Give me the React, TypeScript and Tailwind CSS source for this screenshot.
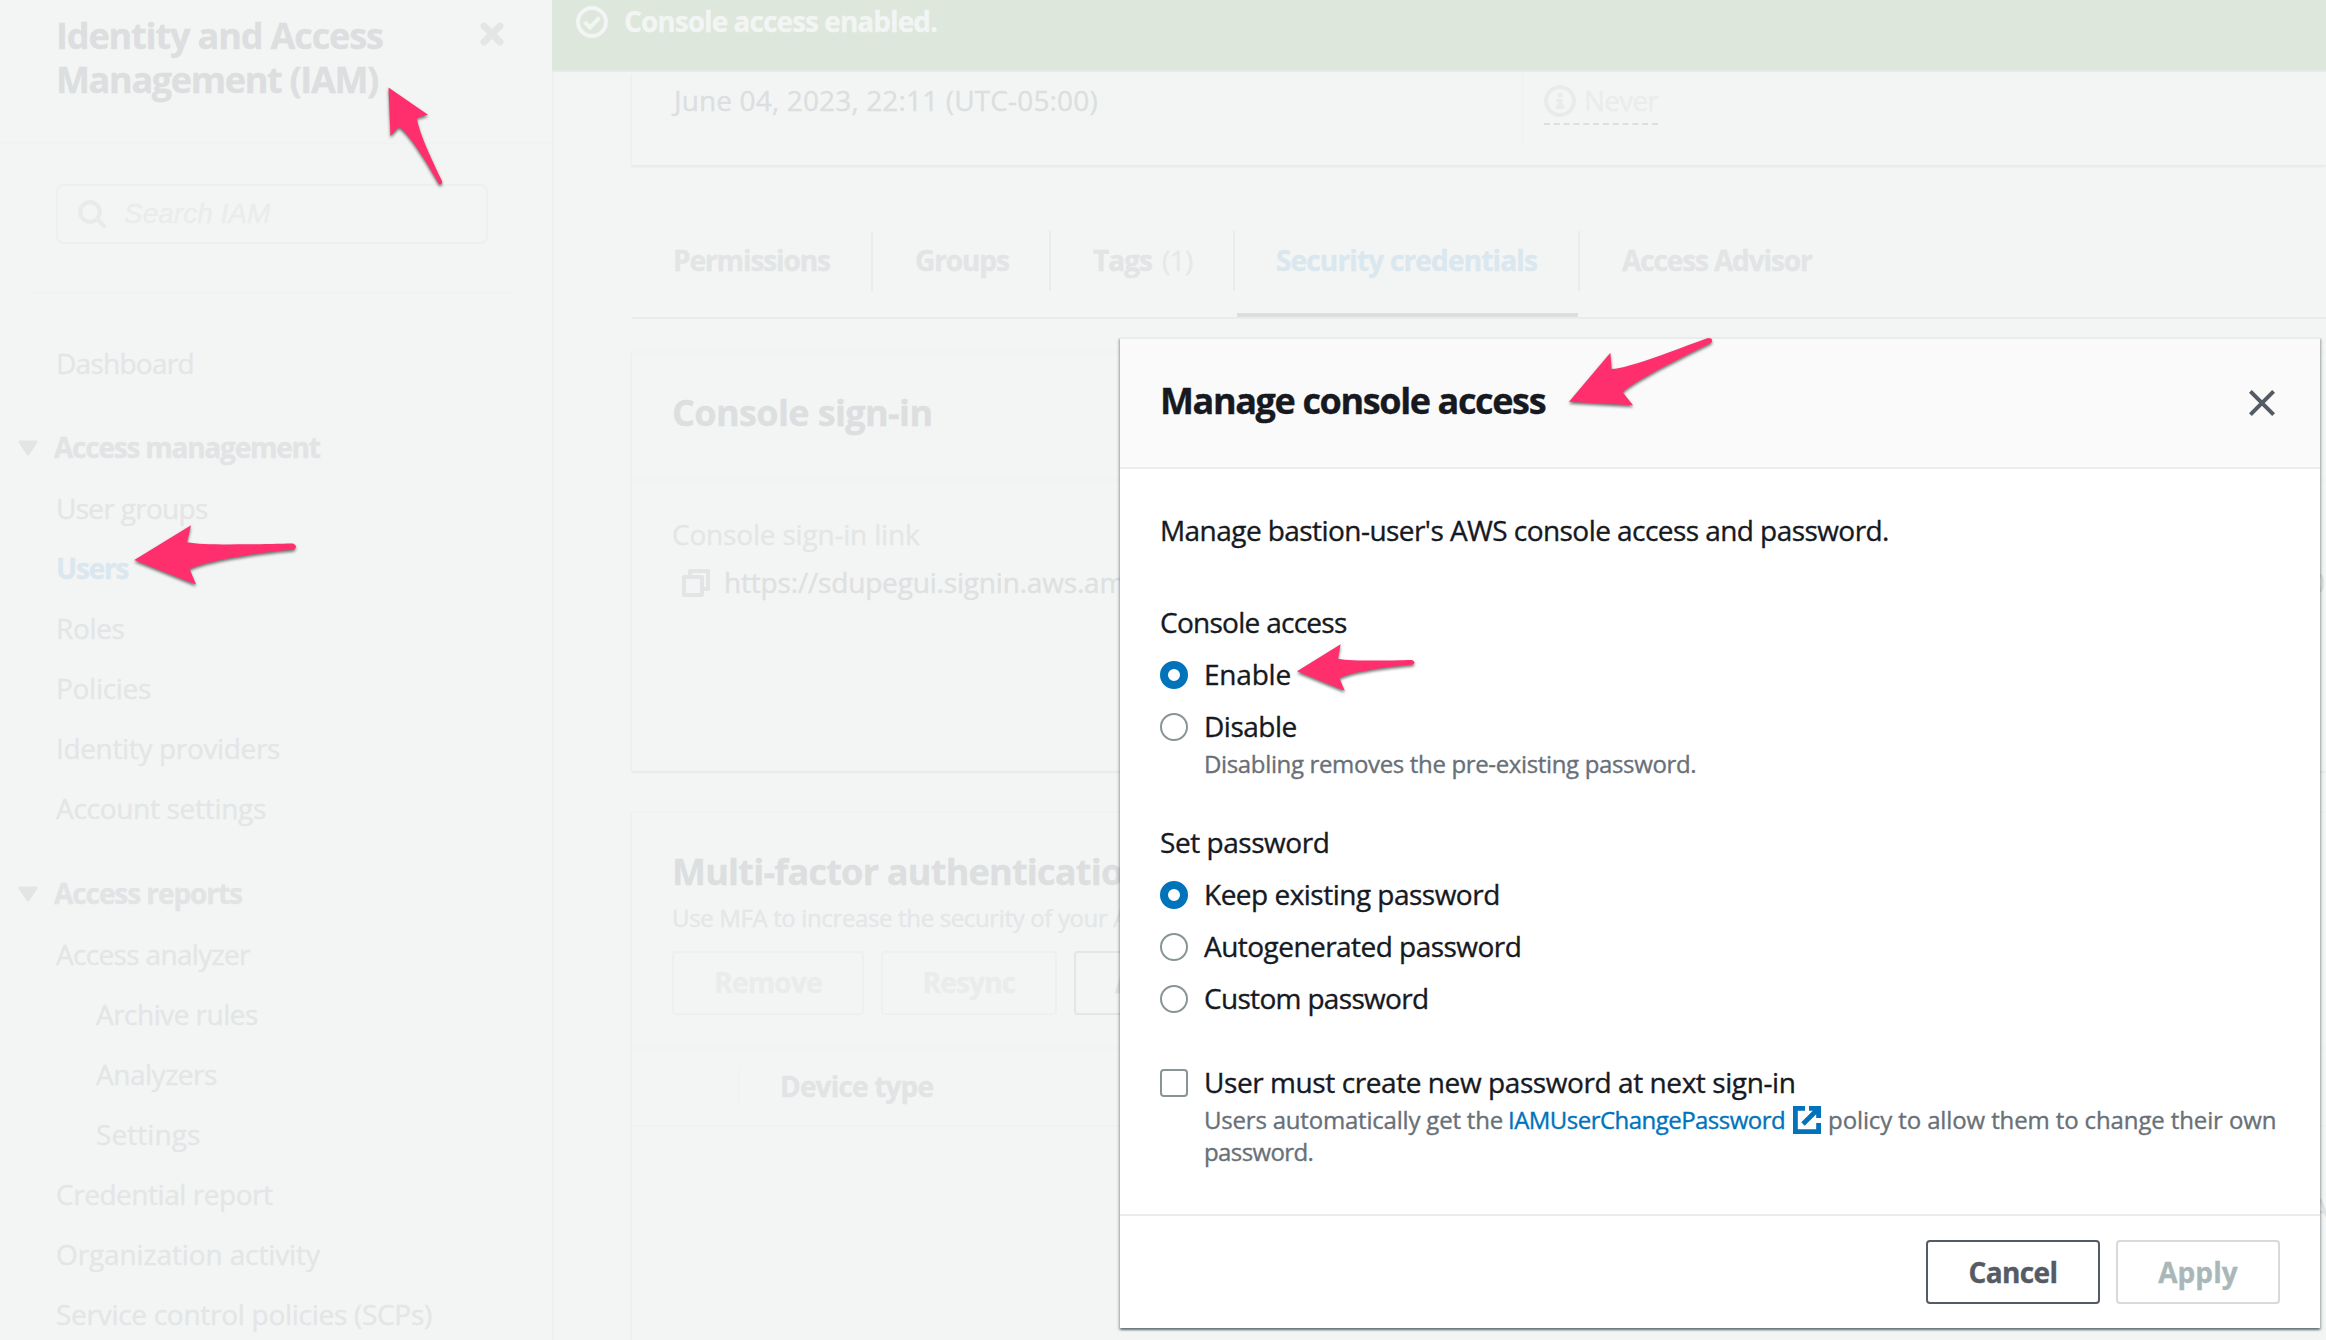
import type { ReactNode } from "react";

type NavItem = { label: string; style: string };

const managementLinks: NavItem[] = [
  { label: "User groups", style: "tracking-[-0.7px]" },
  { label: "Users", style: "tracking-[-1.21px] font-bold text-[#dae7ef]" },
  { label: "Roles", style: "tracking-[-0.35px]" },
  { label: "Policies", style: "tracking-[-0.29px]" },
  { label: "Identity providers", style: "tracking-[-0.35px]" },
  { label: "Account settings", style: "tracking-[-0.3px]" },
];

const reportLinks: NavItem[] = [
  { label: "Access analyzer", style: "tracking-[-0.67px]" },
  { label: "Archive rules", style: "pl-[40px] tracking-[-0.52px]" },
  { label: "Analyzers", style: "pl-[40px] tracking-[-0.48px]" },
  { label: "Settings", style: "pl-[40px] tracking-[0.07px]" },
  { label: "Credential report", style: "tracking-[-0.46px]" },
  { label: "Organization activity", style: "tracking-[-0.12px]" },
  { label: "Service control policies (SCPs)", style: "tracking-[-0.28px]" },
];

function SectionHeading({ label, style }: NavItem) {
  return (
    <div className="mt-6 flex h-[60px] items-center">
      <svg viewBox="0 0 20 16" className="mt-[2px] ml-[18px] h-4 w-5" aria-hidden="true">
        <path d="M2 2H18L10 14Z" fill="#e2e4e5" stroke="#e2e4e5" strokeWidth="3" strokeLinejoin="round" />
      </svg>
      <h2 className={`ml-[16px] font-bold whitespace-nowrap text-[#e2e3e5] ${style}`}>{label}</h2>
    </div>
  );
}

function NavList({ items }: { items: NavItem[] }) {
  return (
    <ul className="mt-[2px] pl-[56px]">
      {items.map((item) => (
        <li key={item.label} className={`h-[60px] leading-[59px] whitespace-nowrap ${item.style}`}>
          {item.label}
        </li>
      ))}
    </ul>
  );
}

function Sidebar() {
  return (
    <aside className="w-[552px] shrink-0 text-[#e3e5e6]">
      <header className="flex h-[144px] justify-between border-b-2 border-[#f1f3f2] pt-[14px] pl-[56px]">
        <h1 className="text-[36px] leading-[44px] font-bold whitespace-nowrap text-[#dcdee0]">
          <span className="block tracking-[-1.13px]">Identity and Access</span>
          <span className="block tracking-[-1.32px]">Management (IAM)</span>
        </h1>
        <svg viewBox="0 0 24 24" className="mt-[8px] mr-[48px] size-6" aria-hidden="true">
          <path d="M4 4L20 20M20 4L4 20" stroke="#e4e6e6" strokeWidth="7" strokeLinecap="round" />
        </svg>
      </header>
      <div className="mt-10 ml-[56px] flex h-[60px] w-[432px] items-center rounded-lg border-2 border-[#eef0ef] pl-[20px]">
        <svg viewBox="0 0 28 28" className="size-7" aria-hidden="true">
          <g fill="none" stroke="#e9ebeb" strokeWidth="4.2" strokeLinecap="round">
            <circle cx="12" cy="12" r="9.8" />
            <path d="M19.5 19.5L26 26" />
          </g>
        </svg>
        <span className="ml-[18px] font-['Liberation_Sans',sans-serif] text-[#eaecec] italic">Search IAM</span>
      </div>
      <hr className="mt-12 mr-[41px] ml-8 border-t-2 border-[#f1f3f2]" />
      <div className="mt-[39px] pl-[56px] leading-[60px] tracking-[-0.73px]">Dashboard</div>
      <SectionHeading label="Access management" style="tracking-[-1.22px]" />
      <NavList items={managementLinks} />
      <SectionHeading label="Access reports" style="tracking-[-1.07px]" />
      <NavList items={reportLinks} />
    </aside>
  );
}

function SuccessBanner() {
  return (
    <div className="flex h-[72px] items-start border-b-2 border-[#e6e9ea] bg-[#dde7dc] pl-6 text-[#f3f5f4]">
      <svg viewBox="0 0 32 32" className="mt-[6px] size-8" aria-hidden="true">
        <g fill="none" stroke="#f3f5f4" strokeWidth="4">
          <circle cx="16" cy="16" r="14" />
          <path d="M8.5 16L14 21.5L23.5 11.5" />
        </g>
      </svg>
      <span className="ml-4 leading-[43px] font-bold tracking-[-0.95px]">Console access enabled.</span>
    </div>
  );
}

function Card({ children, className }: { children: ReactNode; className: string }) {
  return (
    <section
      className={`shadow-[0_2px_2px_0_rgba(0,28,36,0.04),-2px_2px_2px_0_rgba(0,28,36,0.015)] bg-[#f3f5f4] ${className}`}
    >
      {children}
    </section>
  );
}

function Tab({ children, className, active }: { children: ReactNode; className: string; active?: boolean }) {
  return (
    <div className={`flex h-[86px] flex-col justify-between font-bold whitespace-nowrap ${className}`}>
      <div className="h-[60px] border-r-2 border-[#eaecec] leading-[59px]">{children}</div>
      {active && <div className="mr-[2px] -ml-[39px] h-1 bg-[#dcdfde]" />}
    </div>
  );
}

function Content() {
  return (
    <div className="border-l-2 border-[#eef0f0] pl-[78px]">
      <Card className="h-[93px] pt-[6px]">
        <div className="flex leading-[44px]">
          <div className="w-[890px] pl-[42px] tracking-[0.15px] whitespace-nowrap text-[#dcdee0]">
            June 04, 2023, 22:11 (UTC-05:00)
          </div>
          <div className="-mt-[6px] h-[73px] border-l-2 border-[#f1f3f2] pt-[6px] pl-5">
            <div className="flex h-[47px] items-start border-b-2 border-dashed border-[#dcdfde]">
              <svg viewBox="0 0 32 32" className="mt-[7px] size-8" aria-hidden="true">
                <circle cx="16" cy="16" r="14" fill="none" stroke="#e9ebeb" strokeWidth="4" />
                <path d="M14 8h4.5v4H14zM12 14h6.500v6h2v4H12v-4h2v-3h-2z" fill="#e9ebeb" />
              </svg>
              <span className="ml-[8px] tracking-[-0.8px] text-[#eaecec]">Never</span>
            </div>
          </div>
        </div>
      </Card>

      <nav className="mt-[66px] flex border-b-2 border-[#eaecec] text-[#e2e4e5]">
        <Tab className="w-[241px] pl-[41px] tracking-[-1.1px]">Permissions</Tab>
        <Tab className="w-[178px] pl-[42px] tracking-[-1.09px]">Groups</Tab>
        <Tab className="w-[184px] pl-[42px] tracking-[-0.98px]">
          Tags<span className="ml-[10px] font-normal tracking-[-0.63px] text-[#e6e8e8]">(1)</span>
        </Tab>
        <Tab active className="w-[345px] pl-[41px] tracking-[-0.83px] text-[#dae7ef]">
          Security credentials
        </Tab>
        <div className="pl-[42px] leading-[59px] font-bold tracking-[-1.12px]">Access Advisor</div>
      </nav>

      <Card className="mt-8 h-[420px] border-t-2 border-[#f1f3f2]">
        <header className="h-[128px] border-b-2 border-[#f1f3f2] pt-[38px] pl-10">
          <h2 className="text-[36px] leading-[44px] font-bold tracking-[-0.62px] text-[#dcdee0]">Console sign-in</h2>
        </header>
        <div className="pt-[31px] pl-10 leading-[44px]">
          <div className="tracking-[-0.19px] text-[#e4e6e6]">Console sign-in link</div>
          <div className="mt-1 flex items-center pr-[1px] text-[#dee0e1]">
            <svg viewBox="0 0 16 16" className="mt-[2px] ml-2 size-8" aria-hidden="true">
              <path d="M2 5h9v9H2zM5 5V2h9v9h-3" fill="none" stroke="#e2e4e5" strokeWidth="2" strokeLinejoin="round" />
            </svg>
            <span className="ml-[12px] tracking-[-0.18px]">https://sdupegui.signin.aws.am</span>
            <span className="ml-auto">0</span>
          </div>
        </div>
      </Card>

      <Card className="mt-10 h-[560px] border-t-2 border-[#f1f3f2]">
        <header className="h-[236px] border-b-2 border-[#f1f3f2] pt-[37px] pl-10">
          <h2 className="text-[36px] leading-[44px] font-bold tracking-[-0.75px] text-[#dcdee0]">
            Multi-factor authentication
          </h2>
          <p className="mt-2 text-[24px] leading-8 tracking-[-0.36px] text-[#e4e6e7]">
            Use MFA to increase the security of your A
          </p>
          <div className="mt-[17px] flex gap-[17px] text-center font-bold tracking-[-0.8px]">
            <div className="h-16 w-[192px] rounded-[4px] border-2 border-[#eef0ef] leading-[59px] text-[#eaecec]">
              Remove
            </div>
            <div className="h-16 w-[176px] rounded-[4px] border-2 border-[#eef0ef] leading-[59px] text-[#eaecec]">
              Resync
            </div>
            <div className="h-16 w-[200px] rounded-[4px] border-2 border-[#e3e5e6] pl-[39px] text-left leading-[59px] text-[#e2e3e5]">
              A
            </div>
          </div>
        </header>
        <div className="flex h-[78px] items-center border-b-2 border-[#f1f3f2] pl-[106px]">
          <div className="h-10 w-[2px] bg-[#f1f3f2]" />
          <div className="-mt-[2px] ml-[40px] leading-[74px] font-bold tracking-[-0.83px] text-[#e2e3e5]">Device type</div>
        </div>
        <div className="-mr-[3px] pt-[59px] text-right leading-[44px] text-[#dfe1e2]">A</div>
      </Card>
    </div>
  );
}

function Control({ kind }: { kind: "on" | "off" | "box" }) {
  if (kind === "on") {
    return <span className="mt-[9px] size-7 shrink-0 rounded-full border-8 border-[#0073bb] bg-white" />;
  }
  if (kind === "off") {
    return <span className="mt-[9px] size-7 shrink-0 rounded-full border-2 border-[#879596] bg-white" />;
  }
  return <span className="mt-[9px] size-7 shrink-0 rounded-[4px] border-2 border-[#879596] bg-white" />;
}

function Option({ kind, label, style, children }: { kind: "on" | "off" | "box"; label: string; style: string; children?: ReactNode }) {
  return (
    <label className="flex gap-4">
      <Control kind={kind} />
      <span className="block whitespace-nowrap">
        <span className={`block ${style}`}>{label}</span>
        {children}
      </span>
    </label>
  );
}

function Modal() {
  return (
    <div className="absolute top-[337px] left-[1120px] h-[991px] w-[1200px] border-t-2 border-[#e9ecec] bg-white leading-[44px] text-[#16191f] shadow-[0_2px_2px_0_rgba(0,28,36,0.42),2px_2px_2px_0_rgba(0,28,36,0.15),-2px_2px_2px_0_rgba(0,28,36,0.15)]">
      <header className="flex h-[130px] items-start justify-between border-b-2 border-[#e9edec] bg-[#fafafa] pt-[40px] pr-[42px] pl-[40px]">
        <h2 className="text-[36px] font-bold tracking-[-1.38px]">Manage console access</h2>
        <svg viewBox="0 0 16 16" className="mt-[8px] size-8" aria-hidden="true">
          <path d="M2.200 2.200L13.800 13.800M13.800 2.200L2.200 13.800" stroke="#545b64" strokeWidth="2" />
        </svg>
      </header>

      <div className="h-[745px] pt-[39px] pl-[40px]">
        <p className="tracking-[-0.56px]">Manage bastion-user's AWS console access and password.</p>

        <h3 className="mt-12 tracking-[-0.72px]">Console access</h3>
        <div className="mt-2 flex flex-col gap-2">
          <Option kind="on" label="Enable" style="tracking-[-0.2px]" />
          <Option kind="off" label="Disable" style="tracking-[-0.5px]">
            <span className="block text-[24px] leading-8 tracking-[-0.35px] text-[#687078]">
              Disabling removes the pre-existing password.
            </span>
          </Option>
        </div>

        <h3 className="mt-10 tracking-[-0.46px]">Set password</h3>
        <div className="mt-2 flex flex-col gap-2">
          <Option kind="on" label="Keep existing password" style="tracking-[-0.51px]" />
          <Option kind="off" label="Autogenerated password" style="tracking-[-0.54px]" />
          <Option kind="off" label="Custom password" style="tracking-[-0.68px]" />
        </div>

        <div className="mt-10">
          <Option kind="box" label="User must create new password at next sign-in" style="tracking-[-0.42px]">
            <span className="flex h-8 items-center text-[24px] leading-8 text-[#687078]">
              <span className="tracking-[-0.2px]">Users automatically get the</span>
              <span className="ml-[5px] tracking-[-0.53px] text-[#0073bb]">IAMUserChangePassword</span>
              <svg viewBox="0 0 16 16" className="ml-[6px] size-8" aria-hidden="true">
                <path
                  d="M7 2.200H2.200V13.800H13.800V9.500M9 2.200H13.800V7M13.400 2.600L6 10"
                  fill="none"
                  stroke="#0073bb"
                  strokeWidth="2.400"
                />
              </svg>
              <span className="ml-[5px] tracking-[-0.12px]">policy to allow them to change their own</span>
            </span>
            <span className="block text-[24px] leading-8 tracking-[-0.6px] text-[#687078]">password.</span>
          </Option>
        </div>
      </div>

      <footer className="flex h-[114px] justify-end gap-4 border-t-2 border-[#e9edec] pt-6 pr-10 text-center font-bold">
        <button className="h-16 w-[174px] rounded-[4px] border-2 border-[#545b64] leading-[59px] tracking-[-0.62px] text-[#545b64]">
          Cancel
        </button>
        <button className="h-16 w-[164px] rounded-[4px] border-2 border-[#d5dbdb] leading-[59px] tracking-[0.1px] text-[#aab7b8]">
          Apply
        </button>
      </footer>
    </div>
  );
}

const arrows = [
  "M388.500 87.500L428 114.700L416.800 117.700C418.500 132 432 160 442 181Q442.500 185 439 184C428 165 412 137 399 127L390.500 136Z",
  "M134.300 560L191 525.300L187 542.300C205 546 260 544 293 543.500Q298.500 546 294 549.500C260 552 205 561 189.600 569L196 584.500Z",
  "M1569 401.700L1610.400 352.700L1611.600 369C1630 368 1672 351 1708 338Q1713.500 338 1711.500 342.500C1690 353 1635 380 1622.700 392.300L1633 405.300Z",
  "M1297 671.300L1340.600 644.300L1338 658.700C1352 661.500 1390 660.500 1412 660Q1416.500 662 1413 664.500C1385 667 1350 672 1339.400 678.300L1344.700 690.700Z",
];

function Annotations() {
  return (
    <svg viewBox="0 0 2326 1340" className="pointer-events-none absolute inset-0 h-full w-full" aria-hidden="true">
      {arrows.map((d) => (
        <path key={d} d={d} fill="#ff2f6d" className="drop-shadow-[0_2px_1.5px_rgba(0,0,0,0.55)]" />
      ))}
    </svg>
  );
}

export default function App() {
  return (
    <div className="relative flex h-[1340px] w-[2326px] overflow-hidden bg-[#f3f5f4] font-['Open_Sans','Noto_Sans',sans-serif] text-[28px] [-webkit-text-stroke:0.35px_currentColor]">
      <Sidebar />
      <main className="min-w-0 flex-1">
        <SuccessBanner />
        <Content />
      </main>
      <Modal />
      <Annotations />
    </div>
  );
}
